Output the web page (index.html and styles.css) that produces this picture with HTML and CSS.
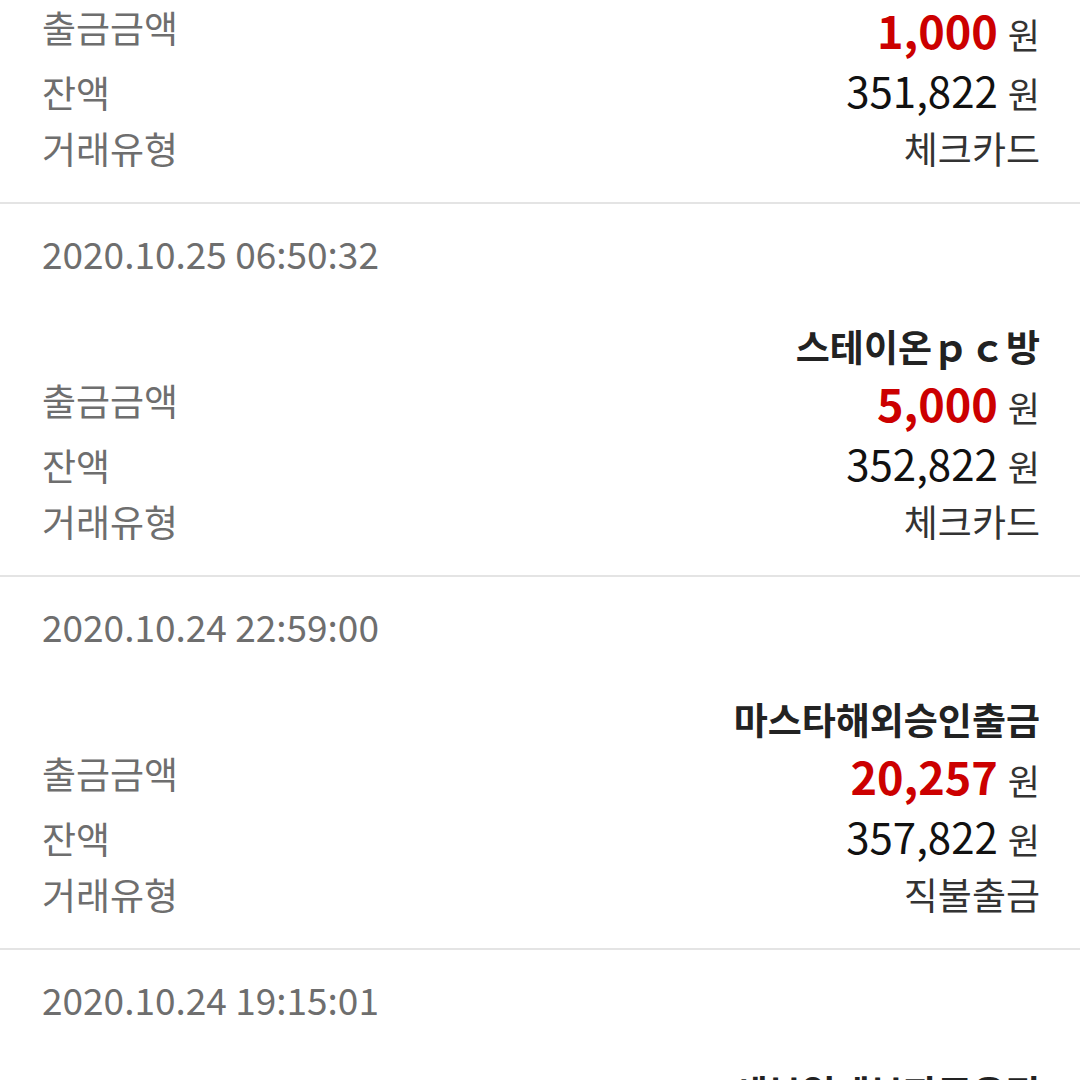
FILE: index.html
```html
<!DOCTYPE html>
<html>
<head>
    <title>거래내역</title>
    <meta charset="utf-8" />
    <link rel="stylesheet" href="styles.css">
</head>
<body>
    <div id="list">
        <div class="item">
            <div class="date">2020.10.25 07:12:04</div>
            <div class="name">스테이온ｐｃ방</div>
            <div class="row amount-row">
                <span class="label">출금금액</span>
                <span class="value"><b class="amount">1,000</b><span class="won">원</span></span>
            </div>
            <div class="row">
                <span class="label">잔액</span>
                <span class="value"><span class="balance">351,822</span><span class="won">원</span></span>
            </div>
            <div class="row">
                <span class="label">거래유형</span>
                <span class="value type">체크카드</span>
            </div>
        </div>

        <div class="item">
            <div class="date">2020.10.25 06:50:32</div>
            <div class="name">스테이온ｐｃ방</div>
            <div class="row amount-row">
                <span class="label">출금금액</span>
                <span class="value"><b class="amount">5,000</b><span class="won">원</span></span>
            </div>
            <div class="row">
                <span class="label">잔액</span>
                <span class="value"><span class="balance">352,822</span><span class="won">원</span></span>
            </div>
            <div class="row">
                <span class="label">거래유형</span>
                <span class="value type">체크카드</span>
            </div>
        </div>

        <div class="item">
            <div class="date">2020.10.24 22:59:00</div>
            <div class="name">마스타해외승인출금</div>
            <div class="row amount-row">
                <span class="label">출금금액</span>
                <span class="value"><b class="amount">20,257</b><span class="won">원</span></span>
            </div>
            <div class="row">
                <span class="label">잔액</span>
                <span class="value"><span class="balance">357,822</span><span class="won">원</span></span>
            </div>
            <div class="row">
                <span class="label">거래유형</span>
                <span class="value type">직불출금</span>
            </div>
        </div>

        <div class="item">
            <div class="date">2020.10.24 19:15:01</div>
            <div class="name">세븐일레븐파주운정</div>
            <div class="row amount-row">
                <span class="label">출금금액</span>
                <span class="value"><b class="amount">3,400</b><span class="won">원</span></span>
            </div>
            <div class="row">
                <span class="label">잔액</span>
                <span class="value"><span class="balance">378,079</span><span class="won">원</span></span>
            </div>
            <div class="row">
                <span class="label">거래유형</span>
                <span class="value type">체크카드</span>
            </div>
        </div>
    </div>
</body>
</html>
```

FILE: styles.css
```css
html, body {
    margin: 0;
    padding: 0;
    background-color: white;
    overflow: hidden;
}

body {
    font-family: "Noto Sans CJK KR", "Noto Sans", sans-serif;
    color: #222;
}

/* list is scrolled: the first item is partly hidden */
#list {
    margin-top: -169px;
}

.item {
    padding: 23px 40px 25px 42px;
    border-bottom: 2px solid #e4e4e4;
}

.date {
    font-size: 37px;
    line-height: 52px;
    color: #6e6e6e;
}

.name {
    margin-top: 41px;
    font-size: 37px;
    line-height: 52px;
    font-weight: 700;
    text-align: right;
    color: #222;
}

.row {
    display: flex;
    justify-content: space-between;
    align-items: baseline;
    height: 58px;
    line-height: 58px;
}

.amount-row {
    height: 62px;
    line-height: 62px;
}

.amount-row .label {
    align-self: flex-start;
    line-height: 56px;
}

.label {
    font-size: 37px;
    color: #6e6e6e;
}

.value {
    font-size: 37px;
    color: #333;
}

.amount {
    font-size: 45px;
    font-weight: 700;
    color: #cc0000;
}

.balance {
    font-size: 42px;
    color: #111;
}

.won {
    margin-left: 10px;
    font-size: 35px;
    color: #333;
}
```
